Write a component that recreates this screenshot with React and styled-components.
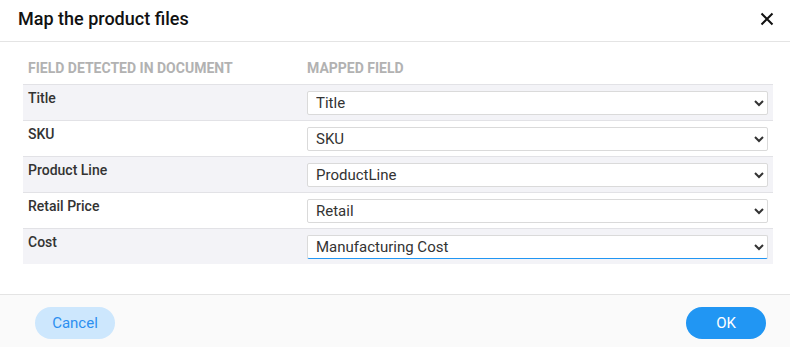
import styled, { createGlobalStyle } from "styled-components";

const GlobalStyle = createGlobalStyle`
  body {
    margin: 0;
    font-family: Roboto, "Liberation Sans", sans-serif;
    background: #fff;
    color: #222;
  }
`;

const mappings = [
  { id: 1, field: "Title", value: "Title" },
  { id: 2, field: "SKU", value: "SKU" },
  { id: 3, field: "Product Line", value: "ProductLine" },
  { id: 4, field: "Retail Price", value: "Retail" },
  { id: 5, field: "Cost", value: "Manufacturing Cost", active: true },
];

const App = () => {
  return (
    <Dialog>
      <GlobalStyle />
      <Header>
        <Title>Map the product files</Title>
        <CloseButton aria-label="Close">
          <svg width="14" height="14" viewBox="0 0 14 14">
            <path
              d="M1.5 1.5L12.5 12.5M12.5 1.5L1.5 12.5"
              stroke="#111"
              strokeWidth="2"
            />
          </svg>
        </CloseButton>
      </Header>
      <Body>
        <Table>
          <HeadRow>
            <HeadCell>Field detected in document</HeadCell>
            <HeadCell>Mapped field</HeadCell>
          </HeadRow>
          {mappings.map((row, i) => (
            <Row key={row.id} $striped={i % 2 === 0}>
              <Label>{row.field}</Label>
              <SelectCell>
                <Select defaultValue={row.value} $active={row.active}>
                  <option>{row.value}</option>
                </Select>
              </SelectCell>
            </Row>
          ))}
        </Table>
      </Body>
      <Footer>
        <Button $variant="secondary">Cancel</Button>
        <Button $variant="primary">OK</Button>
      </Footer>
    </Dialog>
  );
};

export default App;

const Dialog = styled.div`
  width: 790px;
  height: 347px;
  display: flex;
  flex-direction: column;
  background: #fff;
  overflow: hidden;
`;

const Header = styled.div`
  height: 42px;
  box-sizing: border-box;
  display: flex;
  align-items: center;
  justify-content: space-between;
  padding: 0 12px 0 18px;
  border-bottom: 1px solid #e4e4e4;
  flex-shrink: 0;
`;

const Title = styled.h2`
  margin: 0;
  font-size: 18px;
  font-weight: 500;
  line-height: 21px;
  color: #111;
  padding-bottom: 4px;
`;

const CloseButton = styled.button`
  border: none;
  background: transparent;
  padding: 4px;
  display: flex;
  cursor: pointer;
  margin-bottom: 4px;
`;

const Body = styled.div`
  padding: 10px 17px 30px 23px;
  flex-shrink: 0;
`;

const Table = styled.div`
  display: flex;
  flex-direction: column;
`;

const HeadRow = styled.div`
  display: grid;
  grid-template-columns: 284px 1fr;
  padding: 6px 5px 6px 0;
`;

const HeadCell = styled.div`
  font-size: 14px;
  font-weight: 700;
  line-height: 20px;
  color: #b2b2b2;
  text-transform: uppercase;
  padding-left: 5px;

  & + & {
    padding-left: 0;
  }
`;

const Row = styled.div`
  display: grid;
  grid-template-columns: 284px 1fr;
  height: 36px;
  box-sizing: border-box;
  border-top: 1px solid #e2e2e6;
  background: ${(p) => (p.$striped ? "#f3f3f7" : "#fff")};
  padding-right: 5px;
`;

const Label = styled.div`
  font-size: 14px;
  font-weight: 500;
  line-height: 20px;
  color: #333;
  padding: 3px 5px 0;
`;

const SelectCell = styled.div`
  padding-top: 6px;
`;

const Select = styled.select`
  width: 100%;
  height: 24px;
  box-sizing: border-box;
  font-family: Roboto, "Liberation Sans", sans-serif;
  font-size: 15px;
  color: #333;
  background: #fff;
  border: 1px solid #dadada;
  border-bottom-color: ${(p) => (p.$active ? "#2196f3" : "#dadada")};
  border-radius: 2px;
  padding: 0 4px;
  outline: none;
`;

const Footer = styled.div`
  flex: 1;
  display: flex;
  justify-content: space-between;
  align-items: flex-start;
  padding: 12px 24px 0 35px;
  background: #fafafa;
  border-top: 1px solid #e4e4e4;
`;

const Button = styled.button`
  width: 80px;
  height: 32px;
  border: none;
  border-radius: 16px;
  font-family: Roboto, "Liberation Sans", sans-serif;
  font-size: 15px;
  cursor: pointer;
  background: ${(p) => (p.$variant === "primary" ? "#2196f3" : "#cde7fd")};
  color: ${(p) => (p.$variant === "primary" ? "#fff" : "#2c8ff0")};
`;
